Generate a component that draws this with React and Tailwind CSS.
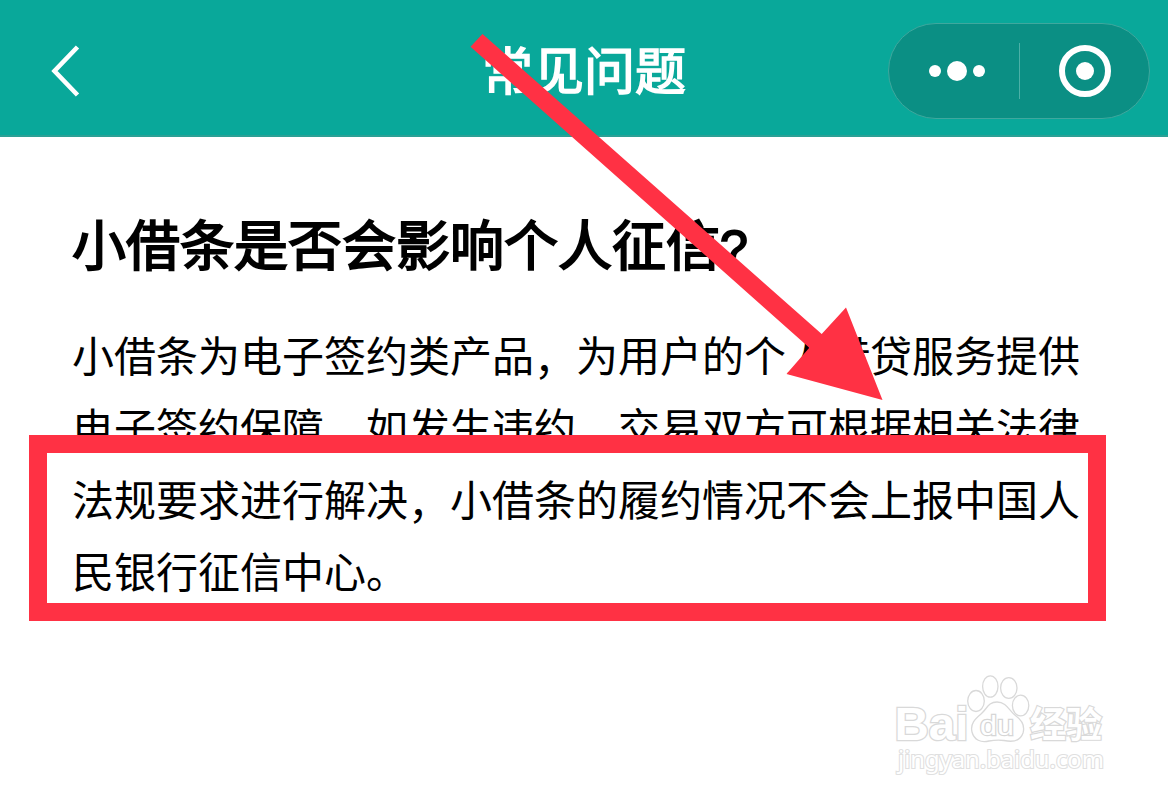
import { Fragment } from 'react'

const paragraph = [
  '小借条为电子签约类产品，为用户的个人借贷服务提供',
  '电子签约保障，如发生违约，交易双方可根据相关法律',
  '法规要求进行解决，小借条的履约情况不会上报中国人',
  '民银行征信中心。',
]

function BackIcon() {
  return (
    <svg width="34" height="56" viewBox="0 0 34 56" fill="none">
      <path d="M29.5 4 L6.5 28 L29.5 52" stroke="#fff" strokeWidth="4.6" />
    </svg>
  )
}

function Capsule() {
  return (
    <div className="flex h-24 w-[262px] items-center rounded-full border border-[#3fa89e] bg-[#0b8f84]">
      <div className="flex w-[130px] items-center justify-center gap-[6px] pl-[5px]">
        <span className="size-3 rounded-full bg-white" />
        <span className="size-[20px] rounded-full bg-white" />
        <span className="size-3 rounded-full bg-white" />
      </div>
      <span className="h-14 w-px bg-[#4cb0a7]" />
      <div className="flex flex-1 items-center justify-center">
        <span className="flex size-[52px] items-center justify-center rounded-full border-[6px] border-white">
          <span className="size-[18px] rounded-full bg-white" />
        </span>
      </div>
    </div>
  )
}

function Header() {
  return (
    <header className="grid h-[137px] grid-cols-[1fr_auto_1fr] items-center border-b-2 border-[#2ba095] bg-[#09a89a] px-[18px]">
      <div className="mt-[7px] ml-[30px]">
        <BackIcon />
      </div>
      <h1 className="mt-px text-[51px] leading-[72px] text-white [-webkit-text-stroke:1.6px_#fff]">
        常见问题
      </h1>
      <div className="mt-[7px] flex justify-end">
        <Capsule />
      </div>
    </header>
  )
}

// Full-width commas sit a little below the baseline
function Line({ text }) {
  return (
    <span className="block">
      {text.split('，').map((part, i) => (
        <Fragment key={part}>
          {i > 0 && <span className="align-[-3px] leading-none">，</span>}
          {part}
        </Fragment>
      ))}
    </span>
  )
}

function Watermark() {
  return (
    <svg
      className="absolute top-[660px] left-[880px]"
      width="240"
      height="130"
      viewBox="0 0 240 130"
      fill="#fff"
      stroke="#d9d9d9"
      strokeWidth="1.3"
    >
      <text
        x="14.5"
        y="80"
        fontSize="47"
        textLength="74"
        lengthAdjust="spacingAndGlyphs"
        fontFamily="'Liberation Sans', sans-serif"
        fontWeight="700"
        strokeWidth="2.6"
        paintOrder="stroke"
      >
        Bai
      </text>
      {/* paw */}
      <ellipse cx="96" cy="41" rx="8.3" ry="10.5" />
      <ellipse cx="110.3" cy="26.5" rx="7.7" ry="10.7" />
      <ellipse cx="128.8" cy="28" rx="8.2" ry="10.3" />
      <ellipse cx="140.6" cy="45.5" rx="8.2" ry="10.3" />
      <path d="M117 42 C127 42 129 51 136 56 C143 61 145 66 143 73 C140 82 131 82 124 80.5 C119 80 115 80 109 81 C101 83 94 80 92 72 C90 64 95 59 101 54 C107 49 108 42 117 42 Z" />
      <text
        x="100"
        y="75"
        fontSize="28"
        textLength="34"
        lengthAdjust="spacingAndGlyphs"
        fontFamily="'Liberation Sans', sans-serif"
        strokeWidth="2.4"
        stroke="#d6d6d6"
        paintOrder="stroke"
      >
        du
      </text>
      <text
        x="150"
        y="78"
        fontSize="36"
        textLength="72"
        fontFamily="'Noto Sans CJK SC', sans-serif"
        fontWeight="700"
        strokeWidth="2.4"
        paintOrder="stroke"
      >
        经验
      </text>
      <text
        x="18"
        y="108"
        fontSize="24"
        textLength="206"
        lengthAdjust="spacingAndGlyphs"
        fontFamily="'Noto Sans', sans-serif"
        strokeWidth="2.2"
        stroke="#e0e0e0"
        paintOrder="stroke"
      >
        jingyan.baidu.com
      </text>
    </svg>
  )
}

// Hand-drawn markup laid over the article
function Annotations() {
  return (
    <>
      <div className="absolute top-[435px] left-[29px] h-[186px] w-[1077px] border-[18px] border-[#ff3144]" />
      <svg className="absolute top-0 left-0" width="1168" height="801" viewBox="0 0 1168 801">
        <path
          d="M470.5 46.7 L482.5 34 L821.7 334 L846 307.5 L882.5 400 L786.5 374 L809.3 347.7 Z"
          fill="#ff3144"
        />
      </svg>
    </>
  )
}

export default function App() {
  return (
    <div className="relative h-[801px] w-[1168px] overflow-hidden bg-white font-['Noto_Sans_CJK_SC',sans-serif]">
      <Header />
      <main className="px-[72px] pt-[68px] text-black">
        <h2 className="text-[54px] leading-[76px] whitespace-nowrap [-webkit-text-stroke:1.9px_#000]">
          小借条是否会影响个人征信
          <span className="font-['Liberation_Sans',sans-serif] text-[50px] leading-none">?</span>
        </h2>
        <p className="mt-[37px] text-[42px] leading-[72px] whitespace-nowrap">
          {paragraph.map((line) => (
            <Line key={line} text={line} />
          ))}
        </p>
      </main>
      <Watermark />
      <Annotations />
    </div>
  )
}
